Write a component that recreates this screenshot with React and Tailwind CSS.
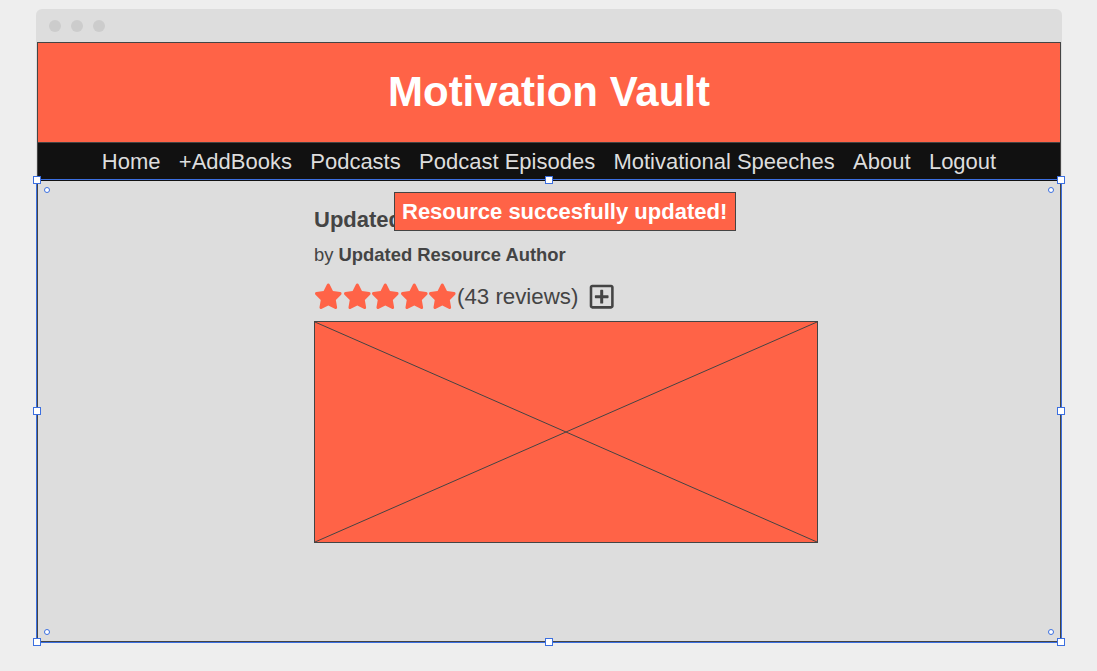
import React from "react";
import { FaStar, FaRegPlusSquare } from "react-icons/fa";

const navItems = ["Home", "+AddBooks", "Podcasts", "Podcast Episodes", "Motivational Speeches", "About", "Logout"];

function Handle({ cls }) {
  return <div className={`absolute w-[8px] h-[8px] bg-white border border-[#3b6fe0] ${cls}`} />;
}
function Dot({ cls }) {
  return <div className={`absolute w-[6px] h-[6px] rounded-full bg-white border border-[#3b6fe0] ${cls}`} />;
}

export default function App() {
  return (
    <div className="w-full h-[671px] bg-[#eeeeee] pt-[9px]" style={{ fontFamily: '"Liberation Sans", Arial, sans-serif' }}>
      <div className="ml-[36px] w-[1026px] rounded-t-[6px] bg-[#dddddd] flex flex-col">
        <div className="h-[33px] flex items-center gap-[10px] pl-[13px]">
          <div className="w-[12px] h-[12px] rounded-full bg-[#cccccc]" />
          <div className="w-[12px] h-[12px] rounded-full bg-[#cccccc]" />
          <div className="w-[12px] h-[12px] rounded-full bg-[#cccccc]" />
        </div>
        <div className="mx-[1px] border border-[#444444] bg-[#ff6347] h-[101px] flex items-center justify-center pb-[2px]">
          <h1 className="text-white font-bold text-[42px] leading-[48px]">Motivation Vault</h1>
        </div>
        <nav className="mx-[1px] h-[38px] bg-[#111111] border-x border-[#444444] flex items-center justify-center gap-[18.3px] text-[#dddddd] text-[22px] leading-[26px]">
          {navItems.map((n) => (
            <span key={n}>{n}</span>
          ))}
        </nav>
        <div className="relative mx-[1px] h-[461px] bg-[#dddddd] border border-t-0 border-[#444444]">
          <div className="pl-[276px] pt-[26px] flex flex-col text-[#444444]">
            <h2 className="font-bold text-[22px] leading-[26px]">Updated Resource Title</h2>
            <p className="mt-[11px] text-[18.4px] leading-[22px]">
              by <span className="font-bold">Updated Resource Author</span>
            </p>
            <div className="mt-[16px] h-[29px] flex items-center">
              <div className="flex text-[#ff6347]">
                {[0, 1, 2, 3, 4].map((i) => (
                  <FaStar key={i} size={28.6} />
                ))}
              </div>
              <span className="text-[22.3px] leading-[26px]">(43 reviews)</span>
              <FaRegPlusSquare size={27.4} className="ml-[10px] text-[#444444]" />
            </div>
            <div className="mt-[10px] w-[504px] h-[222px] bg-[#ff6347] border border-[#444444]">
              <svg width="100%" height="100%" viewBox="0 0 502 220" preserveAspectRatio="none">
                <line x1="0" y1="0" x2="502" y2="220" stroke="#444444" strokeWidth="1" />
                <line x1="502" y1="0" x2="0" y2="220" stroke="#444444" strokeWidth="1" />
              </svg>
            </div>
          </div>

          <div className="absolute left-[356px] top-[11px] w-[342px] bg-[#ff6347] border border-[#444444] px-[7px] h-[39px] flex items-center text-white font-bold text-[22px] leading-[26px] whitespace-nowrap">
            Resource succesfully updated!
          </div>

          <div className="absolute left-[-2px] top-[-2px] right-[-2px] bottom-[-2px] border border-[#3b6fe0] pointer-events-none">
            <Handle cls="left-[-4px] top-[-4px]" />
            <Handle cls="left-1/2 -ml-[4px] top-[-4px]" />
            <Handle cls="right-[-4px] top-[-4px]" />
            <Handle cls="left-[-4px] top-1/2 -mt-[4px]" />
            <Handle cls="right-[-4px] top-1/2 -mt-[4px]" />
            <Handle cls="left-[-4px] bottom-[-4px]" />
            <Handle cls="left-1/2 -ml-[4px] bottom-[-4px]" />
            <Handle cls="right-[-4px] bottom-[-4px]" />
            <Dot cls="left-[7px] top-[7px]" />
            <Dot cls="right-[7px] top-[7px]" />
            <Dot cls="left-[7px] bottom-[7px]" />
            <Dot cls="right-[7px] bottom-[7px]" />
          </div>
        </div>
      </div>
    </div>
  );
}
